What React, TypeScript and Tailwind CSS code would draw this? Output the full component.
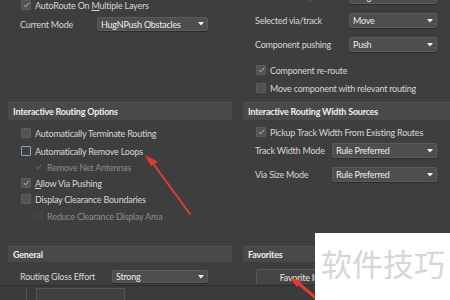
import React from "react";

function Check({ checked = false, focus = false, faint = false, noBox = false }: { checked?: boolean; focus?: boolean; faint?: boolean; noBox?: boolean }) {
  const box = noBox
    ? "border-transparent bg-transparent"
    : focus
    ? "border-[#8ea6c4] bg-[#3f3f3f]"
    : faint
    ? "border-[#444444] bg-[#424242]"
    : "border-[#5e5e5e] bg-[#525252]";
  return (
    <div className={`w-[10px] h-[10px] border rounded-[1px] flex items-center justify-center shrink-0 ${box}`}>
      {checked && (
        <svg width="7" height="6" viewBox="0 0 7 6">
          <path d="M0.8 3 L2.7 4.8 L6.2 0.8" fill="none" stroke={faint || noBox ? "#777777" : "#bdbdbd"} strokeWidth="1" />
        </svg>
      )}
    </div>
  );
}

function Dropdown({ value, w }: { value: string; w: string }) {
  return (
    <div className={`${w} h-full bg-[#4e4e4e] border border-[#5b5b5b] rounded-[2px] flex items-center justify-between pl-[3px] pr-[3px] text-[#ececec] shadow-[0_1px_0_#2c2c2c]`}>
      <span>{value}</span>
      <svg width="6" height="4" viewBox="0 0 6 4">
        <path d="M0 0 L6 0 L3 3.5 Z" fill="#f0f0f0" />
      </svg>
    </div>
  );
}

function CheckRow({ children, className = "", ...p }: { children: React.ReactNode; className?: string; checked?: boolean; focus?: boolean; faint?: boolean; noBox?: boolean }) {
  return (
    <div className={`h-[14px] flex items-center gap-[4px] ${className}`}>
      <Check {...p} />
      <span>{children}</span>
    </div>
  );
}

function Header({ children }: { children: React.ReactNode }) {
  return (
    <div className="h-full bg-[#494949] border-t border-[#505050] flex items-center pl-[5px] font-bold text-[#eeeeee]">
      {children}
    </div>
  );
}

export default function App() {
  return (
    <div className="relative w-[450px] h-[300px] overflow-hidden bg-[#3e3e3e] text-[9px] leading-none text-[#d6d6d6] font-['Lato',sans-serif] tracking-[-0.22px]">
      <div className="h-[285px] pl-[8px] grid grid-cols-[224px_224px] grid-rows-[102px_18px_126px_16px_23px] gap-x-[11px]">
        {/* top left */}
        <div className="flex flex-col pl-[13px]">
          <CheckRow checked className="-mt-[2px]">
            AutoRoute On <u>M</u>ultiple Layers
          </CheckRow>
          <div className="h-[14px] mt-[5px] flex items-center -ml-[1px]">
            <span className="w-[77px]">Current Mode</span>
            <Dropdown value="HugNPush Obstacles" w="w-[111px]" />
          </div>
        </div>
        {/* top right */}
        <div className="flex flex-col pl-[12px]">
          <div className="h-[15px] -mt-[11px] flex items-center">
            <span className="w-[94px]">Unselected via/track</span>
            <Dropdown value="Drag" w="w-[88px]" />
          </div>
          <div className="h-[15px] mt-[9px] flex items-center">
            <span className="w-[94px]">Selected via/track</span>
            <Dropdown value="Move" w="w-[88px]" />
          </div>
          <div className="h-[15px] mt-[9px] flex items-center">
            <span className="w-[94px]">Component pushing</span>
            <Dropdown value="Push" w="w-[88px]" />
          </div>
          <CheckRow checked className="mt-[11px] ml-[1px]">Component re-route</CheckRow>
          <CheckRow className="mt-[4px] ml-[1px]">Move component with relevant routing</CheckRow>
        </div>
        {/* headers */}
        <Header>Interactive Routing Options</Header>
        <Header>Interactive Routing Width Sources</Header>
        {/* middle left */}
        <div className="flex flex-col pl-[13px]">
          <CheckRow className="mt-[6px]">Automatically Terminate Routing</CheckRow>
          <CheckRow focus className="mt-[4px]">Automatically Remove Loops</CheckRow>
          <CheckRow noBox checked faint className="mt-[2px] pl-[12px] text-[#8c8c8c]">Remove Net Antennas</CheckRow>
          <CheckRow checked className="mt-[2px]"><u>A</u>llow Via Pushing</CheckRow>
          <CheckRow className="mt-[2px]">Display Clearance Boundaries</CheckRow>
          <CheckRow faint className="mt-[3px] pl-[12px] text-[#8c8c8c]">Reduce Clearance Display Area</CheckRow>
        </div>
        {/* middle right */}
        <div className="flex flex-col pl-[12px]">
          <CheckRow checked className="mt-[5px] ml-[1px]">Pickup Track Width From Existing Routes</CheckRow>
          <div className="h-[15px] mt-[4px] flex items-center">
            <span className="w-[77px]">Track Width Mode</span>
            <Dropdown value="Rule Preferred" w="w-[105px]" />
          </div>
          <div className="h-[15px] mt-[9px] flex items-center">
            <span className="w-[77px]">Via Size Mode</span>
            <Dropdown value="Rule Preferred" w="w-[105px]" />
          </div>
        </div>
        <Header>General</Header>
        <Header>Favorites</Header>
        {/* bottom */}
        <div className="flex flex-col pl-[12px]">
          <div className="h-[13px] mt-[8px] flex items-center">
            <span className="w-[92px]">Routing Gloss Effort</span>
            <Dropdown value="Strong" w="w-[96px]" />
          </div>
        </div>
        <div className="flex flex-col pl-[13px]">
          <div className="h-[15px] mt-[7px] w-[100px] bg-[#454545] border border-[#5a5a5a] border-b-0 rounded-t-[2px] flex items-center justify-center text-[#e6e6e6]">
            Favorite Items
          </div>
        </div>
      </div>
      {/* bottom tab strip */}
      <div className="h-[15px] border-t border-[#2e2e2e] bg-[#3b3b3b] flex pt-[2px]">
        <div className="w-[27px] h-full border-r border-[#555555]" />
        <div className="w-[10px] h-full border-r border-[#555555]" />
        <div className="w-[88px] h-full border-t border-r border-[#555555] bg-[#404040]" />
      </div>

      {/* red arrows (annotation overlay) */}
      <svg className="absolute left-0 top-0 pointer-events-none" width="450" height="300" viewBox="0 0 450 300">
        <path d="M145 155 L158 162 L151 166 Z" fill="#e8392f" />
        <path d="M152 162 L190 214" stroke="#e8392f" strokeWidth="2" strokeLinecap="round" />
        <path d="M290 278 L302 281 L297 287 Z" fill="#e8392f" />
        <path d="M298 283 L316 298" stroke="#e8392f" strokeWidth="3" />
      </svg>

      {/* watermark */}
      <div className="absolute left-[315px] top-[233px] w-[135px] h-[67px] bg-white flex items-start pt-[14px] pl-[6px]">
        <span className="text-[31px] leading-none text-[#d6d6d6] font-['Noto_Sans_CJK_SC',sans-serif] tracking-[0px]">软件技巧</span>
      </div>
    </div>
  );
}
